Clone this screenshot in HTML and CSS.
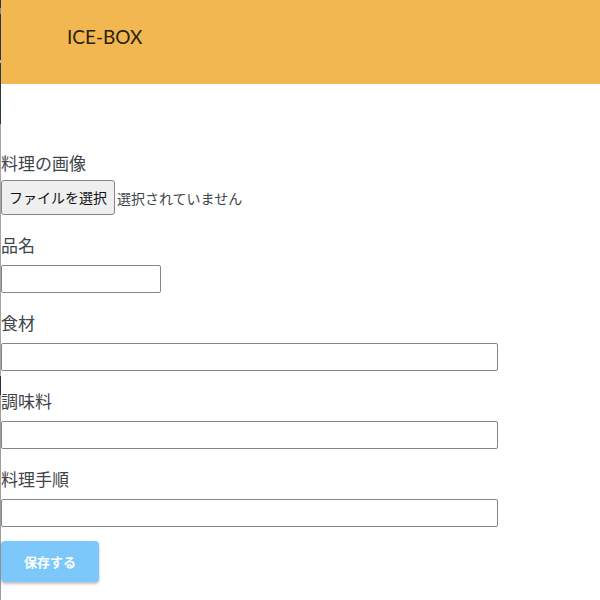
FILE: index.html
```
<!DOCTYPE html>
<html lang="ja">
<head>
  <meta charset="utf-8">
  <meta name="viewport" content="width=device-width, initial-scale=1">
  <title>ICE-BOX</title>
  <link rel="stylesheet" href="styles.css">
</head>
<body>
  <header class="header">
    <a class="brand" href="#">ICE-BOX</a>
  </header>
  <main class="main">
    <form class="form">
      <div class="field">
        <label class="label" for="image">料理の画像</label>
        <div class="picker">
          <span class="picker-button">ファイルを選択</span>
          <span class="picker-status">選択されていません</span>
          <input class="picker-input" id="image" type="file">
        </div>
      </div>
      <div class="field">
        <label class="label" for="name">品名</label>
        <input class="input input-short" id="name" type="text">
      </div>
      <div class="field">
        <label class="label" for="ingredients">食材</label>
        <input class="input" id="ingredients" type="text">
      </div>
      <div class="field">
        <label class="label" for="seasoning">調味料</label>
        <input class="input" id="seasoning" type="text">
      </div>
      <div class="field">
        <label class="label" for="steps">料理手順</label>
        <input class="input" id="steps" type="text">
      </div>
      <button class="save" type="submit">保存する</button>
    </form>
  </main>
</body>
</html>
```
FILE: styles.css
```
* {
  box-sizing: border-box;
}

html {
  min-height: 100%;
  background: #fff;
}

body {
  min-height: 100vh;
  margin: 0;
  padding-left: 1px;
  background: linear-gradient(#27333f 0 8px, #8a8f94 8px 14px, #27333f 14px 60px, #b5b9bc 60px 63px, #2b3a47 63px 124px, #a5a5a5 124px 376px, #27303a 376px 395px, #a09c9a 395px) left top / 1px 100% no-repeat;
  color: #40454a;
  font-family: "Noto Sans CJK JP", sans-serif;
}

.header {
  display: flex;
  align-items: center;
  height: 84px;
  padding: 0 66px 10px;
  background: #f2b750;
}

.brand {
  color: #29230f;
  font-family: Lato, sans-serif;
  font-size: 19px;
  line-height: 24px;
  text-decoration: none;
}

.main {
  padding-top: 63px;
}

.field {
  margin-bottom: 14px;
}

.label {
  display: block;
  font-size: 17px;
  line-height: 32px;
}

.picker {
  display: flex;
  position: relative;
  align-items: center;
  gap: 2px;
  width: fit-content;
  margin-top: 1px;
  font-size: 14px;
}

.picker-button {
  padding: 0 7px;
  border: 1px solid #858585;
  border-radius: 3px;
  background: #efefef;
  color: #111;
  line-height: 33px;
}

.picker-input {
  position: absolute;
  inset: 0;
  width: 100%;
  opacity: 0;
}

.input {
  display: block;
  width: 83%;
  height: 28px;
  margin-top: 4px;
  padding: 2px 4px;
  border: 1px solid #858585;
  border-radius: 2px;
  background: #fff;
  font: inherit;
  font-size: 14px;
}

.input-short {
  width: 160px;
}

.save {
  display: block;
  padding: 0 23px;
  border: 0;
  border-radius: 4px;
  background: #7cc8fb;
  box-shadow: 0 2px 3px rgba(0, 0, 0, 0.25);
  color: #fff;
  font-family: inherit;
  font-size: 13px;
  font-weight: 700;
  line-height: 41px;
}
```
